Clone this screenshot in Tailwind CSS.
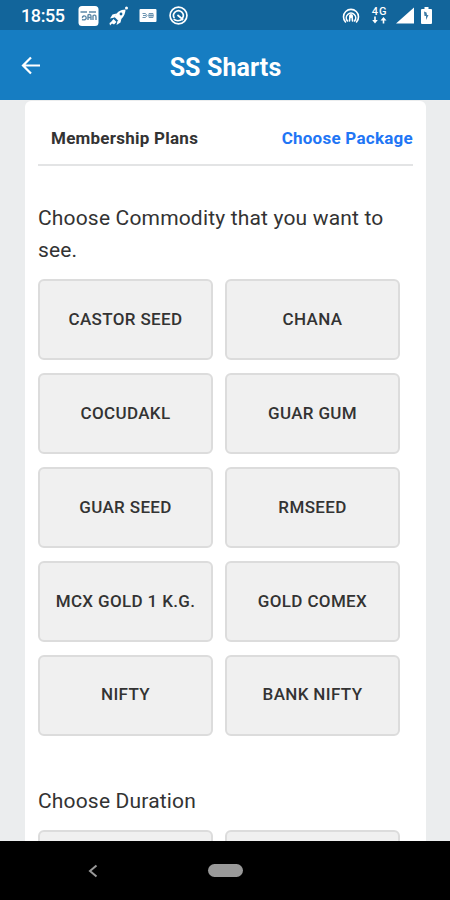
<!DOCTYPE html>
<html lang="en">
  <head>
    <meta charset="UTF-8" />
    <meta name="viewport" content="width=device-width, initial-scale=1.0" />
    <title>SS Sharts</title>
    <script src="https://cdn.jsdelivr.net/npm/@tailwindcss/browser@4"></script>
  </head>
  <body class="font-['Roboto',sans-serif]">
    <div class="flex flex-col h-screen overflow-hidden bg-[#ebedee] text-[#333]">
      <!-- status bar -->
      <div class="flex items-center h-[30px] shrink-0 bg-[#12659b] text-white pl-[21px] pr-[18px] pt-[1px]">
        <div class="w-[44px] text-[18px] leading-none font-medium tracking-[-0.4px] whitespace-nowrap pt-[1px]">18:55</div>
        <svg class="ml-[13px] w-[21px] h-[20px] shrink-0" viewBox="0 0 21 20">
          <rect x="0.5" y="0" width="20" height="20" rx="3.5" fill="#fff" />
          <path d="M2.5 6H9M4 13.5C7 14.5 9 13 8 11C7 9 4 10 4.500 12M10 14V9.500C10 8 13 8 13 10V14M10 11.500H13M15 14V9.500M15 10C16 8.500 18 9 18 11V14M11 6H18" fill="none" stroke="#5d89a8" stroke-width="1.4" />
        </svg>
        <svg class="ml-[10px] w-[20px] h-[20px] shrink-0" viewBox="0 0 20 20" fill="#fff">
          <circle cx="17.500" cy="2" r="1.500" />
          <path d="M16.500 3.500C16.500 8 14 12.500 9.500 15L5.500 11C7 6.500 11.500 3.500 16.500 3.500Z" />
          <path d="M7.500 7.500L3.500 8.500L1 12.500L5.500 11.500ZM12.500 12.500L11.500 16.500L7.500 19L8.500 15ZM4.500 13L7.500 16L5 18.500L3 17.500L1 19.500L0.500 17L2 16Z" />
          <circle cx="12" cy="8" r="1.400" fill="#12659b" />
        </svg>
        <svg class="ml-[10px] w-[18px] h-[13px] shrink-0" viewBox="0 0 18 13">
          <rect x="0.500" width="17" height="13" rx="1" fill="#fff" />
          <path d="M3.500 4.500H6.500L8 6.500L6.500 8.500H3.500M4 6.500H7M10 4.500H14V8.500H10ZM9.500 6.500H14.500M12 4V9" fill="none" stroke="#6a93b0" stroke-width="1" />
        </svg>
        <svg class="ml-[12px] w-[19px] h-[19px] shrink-0" viewBox="0 0 18 18" fill="none" stroke="#fff" stroke-width="1.600">
          <circle cx="9" cy="9" r="8" />
          <path d="M13.500 13L8 8.500M12.800 11.500A4.600 4.600 0 1 0 5 11.500M4.500 12.500C6.500 14.500 10.500 14.500 12.500 12.500" />
        </svg>
        <svg class="ml-auto w-[18px] h-[16px] shrink-0" viewBox="0 0 18 16" fill="none" stroke="#fff" stroke-width="1.600" stroke-linecap="round">
          <path d="M3.500 14A7.500 7.500 0 1 1 14.500 14M5.500 13A4.700 4.700 0 1 1 12.500 13" />
          <path d="M7.500 13L8 8.500H10L10.500 13" />
          <circle cx="9" cy="8" r="1.200" fill="#fff" />
        </svg>
        <div class="ml-[10px] w-[18px] flex flex-col items-center">
          <div class="text-[11px] leading-[9px] font-medium tracking-[1px] pl-[1px]">4G</div>
          <svg class="w-[16px] h-[8px]" viewBox="0 0 16 8">
            <path d="M3.200 0.500H4.800V4H6.800L4 7.500L1.200 4H3.200ZM11.700 7.500H13.300V4.500H15.500L12.500 1L9.500 4.500H11.700Z" fill="#fff" />
          </svg>
        </div>
        <svg class="ml-[8px] w-[18px] h-[17px] shrink-0" viewBox="0 0 19 17"><path d="M19 0V17H0Z" fill="#fff" /></svg>
        <svg class="ml-[7px] w-[11px] h-[17px] shrink-0" viewBox="0 0 11 17">
          <path d="M3.500 0H7.500V2H10Q11 2 11 3V16Q11 17 10 17H1Q0 17 0 16V3Q0 2 1 2H3.500Z" fill="#fff" />
          <path d="M3 4.500L3.500 9H5V13L7.500 8H6L5.500 5.500Z" fill="#3f7ca6" />
        </svg>
      </div>

      <!-- app bar -->
      <div class="relative flex items-center justify-center h-[70px] shrink-0 bg-[#167dc2] text-white pt-[5px] pl-[1px]">
        <svg class="absolute left-[21px] top-[26px] w-[20px] h-[19px]" viewBox="0 0 20 19" fill="none" stroke="#fff" stroke-width="2.200">
          <path d="M19 9.500H2M10 1.500L2 9.500L10 17.500" />
        </svg>
        <h1 class="text-[25px] font-bold tracking-[0.1px]">SS Sharts</h1>
      </div>

      <main class="flex-1 min-h-0 overflow-hidden ml-[25px] mr-[24px] mt-[1px] px-[13px] bg-white rounded-t-md">
        <div class="flex items-center justify-between h-[65px] pl-[13px] pt-[12px] border-b-2 border-[#e3e4e5] text-[17px] font-bold tracking-[0.25px]">
          <span>Membership Plans</span>
          <span class="text-[#1f76f5]">Choose Package</span>
        </div>

        <h2 class="mt-[36px] text-[21px] leading-[32px] tracking-[0.17px]">Choose Commodity that you want to see.</h2>
        <div class="grid grid-cols-2 gap-x-[12px] gap-y-[12.8px] mt-[13.4px] mr-[13px] text-[17px] font-medium tracking-[0.35px]">
          <button class="h-[81px] rounded-md border-2 border-[#dcdcdc] bg-[#f0f0f0]">CASTOR SEED</button>
          <button class="h-[81px] rounded-md border-2 border-[#dcdcdc] bg-[#f0f0f0]">CHANA</button>
          <button class="h-[81px] rounded-md border-2 border-[#dcdcdc] bg-[#f0f0f0]">COCUDAKL</button>
          <button class="h-[81px] rounded-md border-2 border-[#dcdcdc] bg-[#f0f0f0]">GUAR GUM</button>
          <button class="h-[81px] rounded-md border-2 border-[#dcdcdc] bg-[#f0f0f0]">GUAR SEED</button>
          <button class="h-[81px] rounded-md border-2 border-[#dcdcdc] bg-[#f0f0f0]">RMSEED</button>
          <button class="h-[81px] rounded-md border-2 border-[#dcdcdc] bg-[#f0f0f0]">MCX GOLD 1 K.G.</button>
          <button class="h-[81px] rounded-md border-2 border-[#dcdcdc] bg-[#f0f0f0]">GOLD COMEX</button>
          <button class="h-[81px] rounded-md border-2 border-[#dcdcdc] bg-[#f0f0f0]">NIFTY</button>
          <button class="h-[81px] rounded-md border-2 border-[#dcdcdc] bg-[#f0f0f0]">BANK NIFTY</button>
        </div>

        <h2 class="mt-[49px] text-[21px] leading-[32px] tracking-[0.17px]">Choose Duration</h2>
        <div class="grid grid-cols-2 gap-x-[12px] mt-[13px] mr-[13px]">
          <button class="h-[81px] rounded-md border-2 border-[#dcdcdc] bg-[#f0f0f0]"></button>
          <button class="h-[81px] rounded-md border-2 border-[#dcdcdc] bg-[#f0f0f0]"></button>
        </div>
      </main>

      <!-- navigation bar -->
      <div class="flex items-center h-[59px] shrink-0 bg-black pl-[88px]">
        <svg class="w-[10px] h-[14px]" viewBox="0 0 10 14" fill="none" stroke="#999" stroke-width="2"><path d="M8.500 1.500L2 7L8.500 12.500" /></svg>
        <div class="ml-[110px] w-[35px] h-[13px] rounded-full bg-[#999]"></div>
      </div>
    </div>
  </body>
</html>
